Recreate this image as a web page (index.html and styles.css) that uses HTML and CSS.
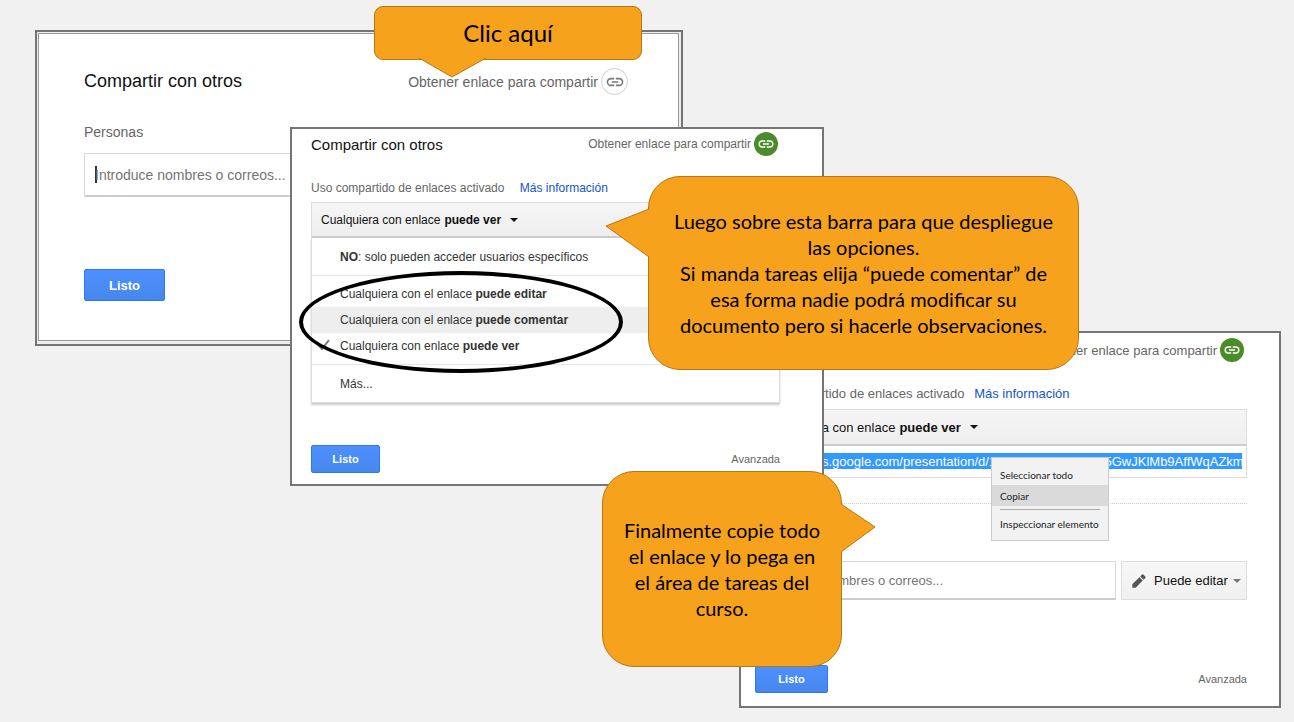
FILE: index.html
```html
<!DOCTYPE html>
<html lang="es">
<head>
<meta charset="UTF-8">
<meta name="viewport" content="width=device-width, initial-scale=1.0">
<title>Compartir con otros</title>
<link rel="stylesheet" href="styles.css">
</head>
<body>
<main class="slide">

  <!-- Step 1: share dialog -->
  <section class="window window-share">
    <div class="frame">
      <header class="bar">
        <h2>Compartir con otros</h2>
        <a class="get-link" href="#">Obtener enlace para compartir
          <span class="link-icon"><svg viewBox="0 0 24 24"><path d="M3.9 12a3.1 3.1 0 0 1 3.1-3.1h4V7H7a5 5 0 0 0 0 10h4v-1.9H7A3.1 3.1 0 0 1 3.9 12zM8 13h8v-2H8v2zm9-6h-4v1.9h4a3.1 3.1 0 0 1 0 6.2h-4V17h4a5 5 0 0 0 0-10z"/></svg></span>
        </a>
      </header>
      <label for="people">Personas</label>
      <input class="field people" id="people" type="text" placeholder="Introduce nombres o correos...">
      <button class="done" type="button">Listo</button>
    </div>
  </section>

  <!-- Step 3: copy the link -->
  <section class="window window-copy">
    <header class="bar">
      <h2>Compartir con otros</h2>
      <a class="get-link" href="#">Obtener enlace para compartir
        <span class="link-icon on"><svg viewBox="0 0 24 24"><path d="M3.9 12a3.1 3.1 0 0 1 3.1-3.1h4V7H7a5 5 0 0 0 0 10h4v-1.9H7A3.1 3.1 0 0 1 3.9 12zM8 13h8v-2H8v2zm9-6h-4v1.9h4a3.1 3.1 0 0 1 0 6.2h-4V17h4a5 5 0 0 0 0-10z"/></svg></span>
      </a>
    </header>
    <p class="status">Uso compartido de enlaces activado <a href="#">Más información</a></p>
    <button class="access" type="button" aria-haspopup="true">Cualquiera con enlace <b>puede ver</b><span class="arrow"></span></button>
    <div class="url-box">
      <input class="url" type="text" aria-label="Enlace" value="https://docs.google.com/presentation/d/1FhXVt4yluYTzhicS5GwJKlMb9AffWqAZkm">
      <div class="context-menu">
        <button type="button">Seleccionar todo</button>
        <button class="hover" type="button">Copiar</button>
        <hr>
        <button type="button">Inspeccionar elemento</button>
      </div>
    </div>
    <div class="invite">
      <input class="field" type="text" aria-label="Personas" placeholder="Introduce nombres o correos...">
      <button class="role" type="button">
        <svg viewBox="0 0 24 24"><path d="M2 17V22H7L17.6 11.4l-5-5L2 17zM21.6 7.4a1.3 1.3 0 0 0 0-1.9l-3.1-3.1a1.3 1.3 0 0 0-1.9 0l-2.7 2.7 5 5 2.7-2.7z"/></svg>
        Puede editar<span class="arrow"></span>
      </button>
    </div>
    <footer class="bar">
      <button class="done" type="button">Listo</button>
      <a class="advanced" href="#">Avanzada</a>
    </footer>
  </section>

  <!-- Step 2: choose the access level -->
  <section class="window window-access">
    <header class="bar">
      <h2>Compartir con otros</h2>
      <a class="get-link" href="#">Obtener enlace para compartir
        <span class="link-icon on"><svg viewBox="0 0 24 24"><path d="M3.9 12a3.1 3.1 0 0 1 3.1-3.1h4V7H7a5 5 0 0 0 0 10h4v-1.9H7A3.1 3.1 0 0 1 3.9 12zM8 13h8v-2H8v2zm9-6h-4v1.9h4a3.1 3.1 0 0 1 0 6.2h-4V17h4a5 5 0 0 0 0-10z"/></svg></span>
      </a>
    </header>
    <p class="status">Uso compartido de enlaces activado <a href="#">Más información</a></p>
    <button class="access" type="button" aria-haspopup="true" aria-expanded="true">Cualquiera con enlace <b>puede ver</b><span class="arrow"></span></button>
    <div class="options">
      <button class="tall" type="button"><b>NO</b>: solo pueden acceder usuarios específicos</button>
      <div class="group">
        <button type="button">Cualquiera con el enlace <b>puede editar</b></button>
        <button class="hover" type="button">Cualquiera con el enlace <b>puede comentar</b></button>
        <button type="button"><svg class="check" viewBox="0 0 12 12"><path d="M1 6.5 4 10 11 1"/></svg>Cualquiera con enlace <b>puede ver</b></button>
      </div>
      <button class="tall" type="button">Más...</button>
    </div>
    <footer class="bar">
      <button class="done" type="button">Listo</button>
      <a class="advanced" href="#">Avanzada</a>
    </footer>
  </section>

  <div class="ring"></div>

  <div class="callout callout-click">
    <svg class="tail" viewBox="0 0 67 20"><path d="M0 0 33 19 67 0"/></svg>
    <p>Clic aquí</p>
  </div>
  <div class="callout callout-bar">
    <svg class="tail" viewBox="0 0 44 50"><path d="M44 1 1 18 44 49"/></svg>
    <p>Luego sobre esta barra para que despliegue las opciones.</p>
    <p>Si manda tareas elija “puede comentar” de esa forma nadie podrá modificar su documento pero si hacerle observaciones.</p>
  </div>
  <div class="callout callout-copy">
    <svg class="tail" viewBox="0 0 35 50"><path d="M0 1 34 24 0 49"/></svg>
    <p>Finalmente copie todo el enlace y lo pega en el área de tareas del curso.</p>
  </div>

</main>
</body>
</html>
```
FILE: styles.css
```css
* {
  box-sizing: border-box;
}

body {
  margin: 0;
  background-color: #f1f1f1;
  font-family: "Liberation Sans", Arial, sans-serif;
  font-size: 13px;
  color: #222;
}

.slide {
  position: relative;
  min-height: 100vh;
}

h2, p {
  margin: 0;
  font-weight: normal;
}

button, input {
  font: inherit;
  color: inherit;
}

a {
  color: #1155cc;
  text-decoration: none;
}

/* Dialog windows */
.window {
  position: absolute;
  display: flex;
  flex-direction: column;
  background-color: #fff;
  border: 2px solid #757575;
}

.window-share {
  left: 35px;
  top: 30px;
  width: 648px;
  padding: 1px 2px 3px 1px;
  background-color: #eee;
  font-size: 14px;
}

.window-access {
  left: 290px;
  top: 127px;
  width: 534px;
  padding: 3px 42px 11px 19px;
  font-size: 12px;
}

.window-copy {
  left: 739px;
  top: 331px;
  width: 542px;
  padding: 5px 32px 13px 14px;
}

.frame {
  display: flex;
  flex-direction: column;
  padding: 34px 50px 39px 45px;
  background-color: #fff;
  border: 1px solid #999;
}

.bar {
  display: flex;
  align-items: center;
  justify-content: space-between;
}

h2 {
  font-size: 15px;
  color: #111;
}

.window-share h2 {
  font-size: 18px;
}

.get-link {
  display: flex;
  align-items: center;
  gap: 3px;
  color: #666;
}

.window-access .get-link {
  margin-right: 2px;
}

.window-copy .get-link {
  margin-right: 3px;
}

.link-icon {
  display: flex;
  align-items: center;
  justify-content: center;
  width: 27px;
  height: 27px;
  border: 1px solid #ccc;
  border-radius: 50%;
}

.link-icon svg {
  width: 20px;
  height: 20px;
  fill: #777;
}

.link-icon.on {
  width: 24px;
  height: 24px;
  border: none;
  background-color: #4b8b29;
}

.link-icon.on svg {
  width: 18px;
  height: 18px;
  fill: #fff;
}

label {
  margin-top: 28px;
  color: #666;
  line-height: 18px;
}

.field {
  width: 100%;
  height: 39px;
  padding: 0 10px;
  background-color: #fff;
  border: 1px solid #d9d9d9;
  border-bottom: 2px solid #ccc;
  outline: none;
}

.field::placeholder {
  color: #757575;
  opacity: 1;
}

/* text cursor at the start of the box */
.people {
  height: 44px;
  margin-top: 12px;
  background: linear-gradient(#333, #333) 10px 12px / 2px 17px no-repeat #fff;
}

.done {
  width: 69px;
  height: 28px;
  padding: 0;
  background: linear-gradient(#4d90fe, #4787ed);
  border: 1px solid #3079ed;
  border-radius: 2px;
  color: #fff;
  font-size: 11px;
  font-weight: bold;
}

.window-share .done {
  width: 81px;
  height: 32px;
  margin-top: 72px;
  font-size: 13px;
}

.window-copy .done {
  width: 73px;
}

.status {
  margin-top: 24px;
  color: #666;
  line-height: 16px;
}

.status a {
  margin-left: 6px;
}

.window-access .status a {
  margin-left: 12px;
}

.access {
  display: flex;
  align-items: center;
  gap: 4px;
  height: 37px;
  margin-top: 6px;
  padding: 0 9px;
  background: linear-gradient(#f5f5f5, #eee);
  border: 1px solid #ddd;
  border-bottom: 2px solid #ccc;
  color: #111;
}

.window-access .access {
  height: 36px;
}

.window-copy .access {
  margin-top: 7px;
  padding: 0 10px;
}

.arrow {
  margin-left: 5px;
  border: 4px solid transparent;
  border-top-color: currentColor;
  border-bottom: none;
}

.options {
  display: flex;
  flex-direction: column;
  border: 1px solid #ddd;
  border-top: none;
  box-shadow: 0 2px 2px #ccc;
}

.options button {
  position: relative;
  height: 26px;
  padding: 0 28px;
  background: none;
  border: none;
  color: #333;
  text-align: left;
}

.options .tall {
  height: 37px;
}

.options .hover {
  background-color: #eee;
}

.group {
  display: flex;
  flex-direction: column;
  padding: 5px 0;
  border: solid #e5e5e5;
  border-width: 1px 0;
}

.check {
  position: absolute;
  left: 6px;
  top: 6px;
  width: 12px;
  height: 12px;
  fill: none;
  stroke: #777;
  stroke-width: 2;
}

.window-access .bar:last-child {
  margin-top: 42px;
}

.advanced {
  color: #666;
  font-size: 11px;
}

/* Link box and its context menu */
.url-box {
  position: relative;
  padding: 7px 4px 8px;
  border: 1px solid #ddd;
  border-top: none;
}

.url {
  display: block;
  width: 100%;
  height: 16px;
  padding: 0 0 0 2px;
  background-color: #3399ff;
  border: none;
  color: #fff;
}

.context-menu {
  position: absolute;
  left: 235px;
  top: 11px;
  display: flex;
  flex-direction: column;
  width: 118px;
  padding: 6px 0;
  background-color: #f2f2f2;
  border: 1px solid #ccc;
  font-family: "Segoe UI", Lato, sans-serif;
  font-size: 10px;
}

.context-menu button {
  height: 21px;
  padding: 0 8px;
  background: none;
  border: none;
  text-align: left;
  white-space: nowrap;
}

.context-menu .hover {
  background-color: #dadada;
}

.context-menu hr {
  width: 100px;
  margin: 3px 8px;
  border: none;
  border-top: 1px solid #aaa;
}

.invite {
  display: flex;
  gap: 5px;
  margin-top: 25px;
  padding-top: 57px;
  border-top: 1px dotted #ccc;
}

.invite .field {
  flex: 1;
}

.role {
  display: flex;
  align-items: center;
  width: 126px;
  padding: 0 5px 0 9px;
  background: linear-gradient(#f7f7f7, #f0f0f0);
  border: 1px solid #ddd;
  color: #111;
}

.role svg {
  width: 16px;
  height: 16px;
  margin-right: 7px;
  fill: #555;
}

.role .arrow {
  border-top-color: #777;
}

.window-copy .bar:last-child {
  margin-top: 65px;
}

/* Marks drawn over the windows */
.ring {
  position: absolute;
  left: 299px;
  top: 271px;
  width: 324px;
  height: 102px;
  border: 4px solid #000;
  border-radius: 50%;
}

.callout {
  position: absolute;
  display: flex;
  flex-direction: column;
  justify-content: center;
  background-color: #f7a21d;
  border: 1px solid #b57614;
  border-radius: 32px;
  color: #000;
  font-family: "Gill Sans MT", "Gill Sans", Lato, sans-serif;
  font-size: 20px;
  line-height: 26px;
  text-align: center;
}

.callout-click {
  left: 374px;
  top: 6px;
  width: 268px;
  padding: 13px;
  border-radius: 9px;
  font-size: 24px;
}

.callout-bar {
  left: 648px;
  top: 176px;
  width: 431px;
  padding: 31px 18px;
}

.callout-copy {
  left: 602px;
  top: 471px;
  width: 240px;
  padding: 45px 16px;
}

.tail {
  position: absolute;
  fill: #f7a21d;
  stroke: #b57614;
}

.callout-click .tail {
  left: 44px;
  top: 51px;
  width: 67px;
  height: 20px;
}

.callout-bar .tail {
  left: -44px;
  top: 31px;
  width: 44px;
  height: 50px;
}

.callout-copy .tail {
  left: 238px;
  top: 31px;
  width: 35px;
  height: 50px;
}
```
